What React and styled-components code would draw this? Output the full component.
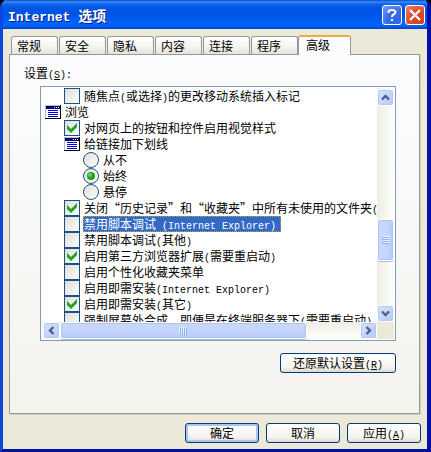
import React from 'react'
import styled, { createGlobalStyle, css } from 'styled-components'

const GlobalStyle = createGlobalStyle`
    * { box-sizing: border-box; }
    body {
        margin: 0;
        background: #000;
        color: #000;
        font: 12px/16px "Noto Sans CJK SC", sans-serif;
    }
    button, input { font: inherit; color: inherit; margin: 0; padding: 0; }
`

const StyledWindow = styled.main`
    display: flex;
    flex-direction: column;
    height: 100vh;
    min-height: 320px;
    overflow: hidden;
    border-radius: 7px 7px 0 0;
    background: #ece9d8;
    border: solid;
    border-width: 0 4px 3px 3px;
    border-color: #0a48dc #0010a8 #0010a0 #0a48dc;
`

const StyledTitleBar = styled.header`
    display: flex;
    align-items: center;
    gap: 3px;
    height: 29px;
    flex: none;
    margin: 0 -4px 0 -3px;
    padding: 1px 6px 0 8px;
    background: linear-gradient(#0a47c8 0, #3a8cf8 2px, #0a62ec 4px, #0054e3 9px, #0055e8 16px, #0064fb 23px, #0062f8 26px, #0040c8 29px);
`

const StyledTitle = styled.h1`
    flex: 1;
    margin: 0;
    color: #fff;
    font-size: 14px;
    font-weight: bold;
    line-height: 20px;
    text-shadow: 1px 1px #0a1883;
`

const StyledLatin = styled.span`
    font-family: "Liberation Mono", monospace;
    font-size: ${({ $size }) => $size || 10}px;
    line-height: 1;
    white-space: pre;
`

const StyledCaptionButton = styled.button`
    display: grid;
    place-items: center;
    width: 20px;
    height: 20px;
    border: 1px solid #fff;
    border-radius: 3px;
    background: ${({ $close }) => $close
        ? 'radial-gradient(circle at 80% 85%, #d8401c, #dc4c2c 50%, #e88a6c)'
        : 'radial-gradient(circle at 80% 85%, #2c64e8, #3c6ce4 50%, #7ca0f0)'};
`

const StyledTabs = styled.div`
    display: flex;
    align-items: flex-end;
    height: 20px;
    flex: none;
    margin: 5px 6px 0 8px;
    gap: 1px;
`

const StyledTab = styled.button`
    flex: 0 1 47px;
    height: 18px;
    text-align: left;
    white-space: nowrap;
    padding: 0 0 0 5px;
    border: 1px solid #919b9c;
    border-bottom: none;
    border-radius: 3px 3px 0 0;
    background: linear-gradient(#fff, #f4f3ee 60%, #e4e2d8);
    ${({ $selected }) => $selected && css`
        flex-basis: 53px;
        position: relative;
        height: 20px;
        margin: 0 0 -1px -1px;
        padding: 0 0 2px 7px;
        border-top: 2px solid #f0ac38;
        background: #fcfcfe;
    `}
`

const StyledPanel = styled.section`
    display: flex;
    flex-direction: column;
    flex: 1;
    min-height: 0;
    margin: 0 7px 0 6px;
    padding: 10px 23px 40px 30px;
    border: 1px solid #919b9c;
    box-shadow: 1px 1px #d0cebf;
    background: linear-gradient(#fcfcfe, #f4f3ee);
`

const StyledCaption = styled.h2`
    flex: none;
    height: 16px;
    margin: 0 0 5px -16px;
    font-size: 12px;
    font-weight: normal;
    line-height: 16px;
`

const StyledListBox = styled.div`
    display: grid;
    grid-template: minmax(0, 1fr) 17px / minmax(0, 1fr) 17px;
    flex: 1;
    min-height: 0;
    padding: 1px;
    border: 1px solid #7f9db9;
    background: #fff;
`

const StyledList = styled.div`
    overflow: hidden;
    padding-left: 3px;
`

const StyledRow = styled.label`
    display: flex;
    gap: 3px;
    height: 16px;
    padding-left: ${({ $level }) => $level * 19}px;
    white-space: nowrap;
`

const StyledText = styled.span`
    height: 16px;
    padding: 0 5px 0 1px;
    line-height: 16px;
    ${({ $selected }) => $selected && css`
        background: #316ac5;
        color: #fff;
        outline: 1px dotted #c8a050;
        outline-offset: -1px;
    `}
`

const StyledMark = styled.span`
    display: grid;
    flex: none;
    width: 16px;
    height: 16px;

    & > * { grid-area: 1 / 1; }
    svg { pointer-events: none; }
`

const StyledInput = styled.input`
    appearance: none;
    width: 16px;
    height: 16px;
    border: 1px solid #1c5180;
    border-radius: ${({ type }) => type === 'radio' ? '50%' : 0};
    background: linear-gradient(135deg, #dcdcd7, #fff);
`

const StyledScroll = styled.div`
    display: flex;
    flex-direction: ${({ $vertical }) => $vertical ? 'column' : 'row'};
    padding: ${({ $vertical }) => $vertical ? '1px 0 0' : '0 0 0 1px'};
    background: linear-gradient(${({ $vertical }) => $vertical ? '90deg' : '180deg'}, #eeede5, #fefefb);
`

const StyledArrow = styled.button`
    display: grid;
    place-items: center;
    flex: 0 0 17px;
    border: 1px solid #fff;
    border-radius: 3px;
    box-shadow: inset 0 0 0 1px #b4c8f6;
    background: linear-gradient(135deg, #d8e4ff, #b4c8f8);
`

const StyledGap = styled.div`
    flex: ${({ $grow }) => $grow} 1 0;
`

const StyledThumb = styled.div`
    display: grid;
    place-items: center;
    flex: ${({ $grow }) => $grow} 1 0;
    border: 1px solid #fff;
    border-radius: 3px;
    box-shadow: inset 0 0 0 1px #b0c4f4, 0 1px #a8bce0;
    background: linear-gradient(${({ $vertical }) => $vertical ? '90deg' : '180deg'}, #c9d8fc, #c4d4fd 60%, #b4c8f8);
`

const StyledCorner = styled.div`
    background: #ece9d8;
`

const StyledButton = styled.button`
    flex: 0 1 ${({ $wide }) => $wide ? 116 : 74}px;
    height: 20px;
    line-height: 16px;
    white-space: nowrap;
    border: 1px solid #003c74;
    border-radius: 3px;
    background: linear-gradient(#fff, #f4f3ee 75%, #dcd8cc);
    ${({ $primary }) => $primary && css`
        box-shadow: inset 0 0 0 2px #a8c4f0;
    `}
`

const StyledActions = styled.div`
    display: flex;
    justify-content: flex-end;
    flex: none;
    gap: 7px;
    padding: ${({ $inner }) => $inner ? '12px 0 0' : '9px 6px 6px'};
`

const rows = [
    { level: 1, type: 'checkbox', text: '随焦点(或选择)的更改移动系统插入标记' },
    { level: 0, text: '浏览' },
    { level: 1, type: 'checkbox', text: '对网页上的按钮和控件启用视觉样式', checked: true },
    { level: 1, text: '给链接加下划线' },
    { level: 2, type: 'radio', text: '从不' },
    { level: 2, type: 'radio', text: '始终', checked: true },
    { level: 2, type: 'radio', text: '悬停' },
    { level: 1, type: 'checkbox', text: '关闭“历史记录”和“收藏夹”中所有未使用的文件夹(', checked: true },
    { level: 1, type: 'checkbox', text: '禁用脚本调试 (Internet Explorer)', selected: true },
    { level: 1, type: 'checkbox', text: '禁用脚本调试(其他)' },
    { level: 1, type: 'checkbox', text: '启用第三方浏览器扩展(需要重启动)', checked: true },
    { level: 1, type: 'checkbox', text: '启用个性化收藏夹菜单' },
    { level: 1, type: 'checkbox', text: '启用即需安装(Internet Explorer)' },
    { level: 1, type: 'checkbox', text: '启用即需安装(其它)', checked: true },
    { level: 1, type: 'checkbox', text: '强制屏幕外合成，即便是在终端服务器下(需要重启动)' },
]

const tabs = ['常规', '安全', '隐私', '内容', '连接', '程序', '高级']

// Half-width characters are set in the monospace face, half a Chinese character wide
const Mixed = ({ children, size }) => children.split(/([ -~]+)/).map((part, i) => (
    i % 2 ? <StyledLatin key={i} $size={size}>{part}</StyledLatin> : part
))

const Key = ({ children }) => <StyledLatin>(<u>{children}</u>)</StyledLatin>

const GroupIcon = () => (
    <svg width="16" height="16" shapeRendering="crispEdges" aria-hidden="true">
        <rect y="1" width="16" height="14" fill="#000" />
        <rect y="1" width="15" height="13" fill="#b8b8b8" />
        <rect x="1" y="2" width="14" height="12" fill="#fff" />
        <rect x="1" y="2" width="14" height="3" fill="#000080" />
        <path fill="#fff" d="M9 3h1v1H9zM11 3h1v1h-1zM13 3h1v1h-1z" />
        <path fill="#0000d8" d="M3 6h10v1H3zM3 8h10v1H3zM3 10h10v1H3zM3 12h10v1H3z" />
    </svg>
)

const Mark = ({ type, checked }) => {
    if (!type) {
        return <StyledMark><GroupIcon /></StyledMark>
    }
    return <StyledMark>
        <StyledInput type={type} name={type === 'radio' ? 'underline' : undefined} defaultChecked={checked} />
        {checked && <svg width="16" height="16" aria-hidden="true">
            {type === 'radio'
                ? <><circle cx="8" cy="8" r="4" fill="#21a121" /><circle cx="7" cy="7" r="2" fill="#5cd45c" /></>
                : <path fill="#21a121" d="M3 5l4 4 6-6v4l-6 6-4-4z" />}
        </svg>}
    </StyledMark>
}

const Arrow = ({ label, turn }) => (
    <StyledArrow aria-label={label}>
        <svg width="9" height="9" aria-hidden="true">
            <path transform={`rotate(${turn} 4.5 4.5)`} d="M1 6.5l3.5-3.5L8 6.5" fill="none" stroke="#4d6185" strokeWidth="2.4" />
        </svg>
    </StyledArrow>
)

const Grip = ({ vertical }) => (
    <svg width="8" height="8" shapeRendering="crispEdges" aria-hidden="true">
        <g transform={vertical ? 'rotate(90 4 4)' : undefined}>
            <path fill="#eef4fe" d="M0 0h1v7H0zM2 0h1v7H2zM4 0h1v7H4zM6 0h1v7H6z" />
            <path fill="#8cb0f8" d="M1 1h1v7H1zM3 1h1v7H3zM5 1h1v7H5zM7 1h1v7H7z" />
        </g>
    </svg>
)

export default () => (
    <StyledWindow lang="zh-CN">
        <GlobalStyle />
        <StyledTitleBar>
            <StyledTitle><Mixed size={13}>Internet 选项</Mixed></StyledTitle>
            <StyledCaptionButton aria-label="帮助">
                <svg width="12" height="14" aria-hidden="true">
                    <path d="M2.5 5V3.5Q3 2 6 2t3.500 2Q9.500 5.500 7.500 6.500 6 7.300 6 9M6 11v2" fill="none" stroke="#fff" strokeWidth="2" />
                </svg>
            </StyledCaptionButton>
            <StyledCaptionButton $close aria-label="关闭">
                <svg width="12" height="12" aria-hidden="true">
                    <path d="M1 1l10 10M11 1L1 11" stroke="#fff" strokeWidth="2.2" />
                </svg>
            </StyledCaptionButton>
        </StyledTitleBar>
        <StyledTabs role="tablist">
            {tabs.map(tab => (
                <StyledTab key={tab} role="tab" aria-selected={tab === '高级'} $selected={tab === '高级'}>{tab}</StyledTab>
            ))}
        </StyledTabs>
        <StyledPanel>
            <StyledCaption>设置<Key>S</Key><StyledLatin>:</StyledLatin></StyledCaption>
            <StyledListBox>
                <StyledList>
                    {rows.map(row => (
                        <StyledRow key={row.text} as={row.type ? 'label' : 'div'} $level={row.level}>
                            <Mark type={row.type} checked={row.checked} />
                            <StyledText $selected={row.selected}><Mixed>{row.text}</Mixed></StyledText>
                        </StyledRow>
                    ))}
                </StyledList>
                <StyledScroll $vertical>
                    <Arrow label="向上" turn={0} />
                    <StyledGap $grow={115} />
                    <StyledThumb $vertical $grow={40}><Grip vertical /></StyledThumb>
                    <StyledGap $grow={45} />
                    <Arrow label="向下" turn={180} />
                </StyledScroll>
                <StyledScroll>
                    <Arrow label="向左" turn={270} />
                    <StyledThumb $grow={248}><Grip /></StyledThumb>
                    <StyledGap $grow={54} />
                    <Arrow label="向右" turn={90} />
                </StyledScroll>
                <StyledCorner />
            </StyledListBox>
            <StyledActions $inner>
                <StyledButton $wide>还原默认设置<Key>R</Key></StyledButton>
            </StyledActions>
        </StyledPanel>
        <StyledActions>
            <StyledButton $primary>确定</StyledButton>
            <StyledButton>取消</StyledButton>
            <StyledButton>应用<Key>A</Key></StyledButton>
        </StyledActions>
    </StyledWindow>
)
